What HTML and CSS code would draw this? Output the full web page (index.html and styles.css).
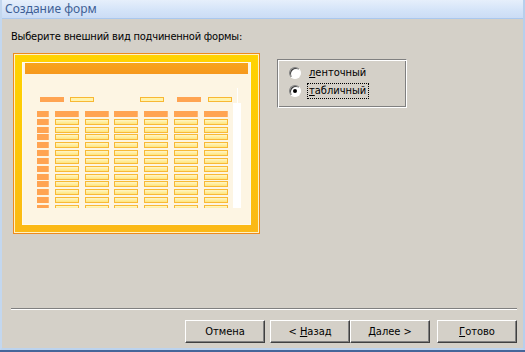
FILE: index.html
```html
<!DOCTYPE html>
<html lang="ru">
<head>
    <meta charset="UTF-8">
    <title>Создание форм</title>
    <link rel="stylesheet" href="styles.css">
</head>
<body>
    <div class="window">
        <div class="titlebar">Создание форм</div>

        <div class="content">
            <p class="prompt">Выберите внешний вид подчиненной формы:</p>

            <div class="main">
                <!-- preview of the table layout -->
                <div class="preview">
                    <div class="frame">
                        <div class="sheet">
                            <div class="sheet-head"></div>
                            <div class="labels">
                                <span class="lbl orange l1"></span>
                                <span class="lbl yellow l2"></span>
                                <span class="lbl yellow l3"></span>
                                <span class="lbl orange l4"></span>
                                <span class="lbl yellow l5"></span>
                            </div>
                            <div class="grid" id="grid"></div>
                            <div class="scroll-line"></div>
                            <div class="scroll-bar"></div>
                        </div>
                    </div>
                </div>

                <!-- layout choice -->
                <div class="group">
                    <div class="option">
                        <span class="radio"></span>
                        <span class="option-label"><u>л</u>енточный</span>
                    </div>
                    <div class="option">
                        <span class="radio checked"></span>
                        <span class="option-label focused"><u>т</u>абличный</span>
                    </div>
                </div>
            </div>
        </div>

        <div class="footer">
            <div class="separator"></div>
            <div class="buttons">
                <button type="button" class="btn cancel">Отмена</button>
                <button type="button" class="btn">&lt; <u>Н</u>азад</button>
                <button type="button" class="btn"><u>Д</u>алее &gt;</button>
                <button type="button" class="btn finish"><u>Г</u>отово</button>
            </div>
        </div>
    </div>

    <script>
        // build the miniature table: header row + data rows
        const grid = document.getElementById('grid');
        const rows = 13;
        const cols = 7;
        for (let r = 0; r < rows; r++) {
            for (let c = 0; c < cols; c++) {
                const cell = document.createElement('span');
                cell.className = (r === 0 || c === 0) ? 'cell head' : 'cell field';
                grid.appendChild(cell);
            }
        }
    </script>
</body>
</html>
```

FILE: styles.css
```css
* {
    box-sizing: border-box;
}
body {
    margin: 0;
    width: 525px;
    height: 352px;
    overflow: hidden;
    background-color: #46669a;
    font-family: "DejaVu Sans Condensed", "Liberation Sans", sans-serif;
    font-size: 11px;
    color: #000;
}
.window {
    display: flex;
    flex-direction: column;
    width: 525px;
    height: 350px;
    background-color: #d4d0c8;
    border-left: 2px solid #c3d7ef;
    border-right: 2px solid #b7cfec;
    border-bottom: 2px solid #bcd3ee;
}
.titlebar {
    height: 19px;
    padding-left: 3px;
    line-height: 18px;
    font-family: "Noto Sans", sans-serif;
    font-size: 12px;
    color: #3e5f95;
    background: linear-gradient(#e6effb, #d3e3f8 60%, #cbdcf5);
    border-bottom: 1px solid #aac8ee;
}
.content {
    flex: 1;
}
.prompt {
    margin: 11px 0 0 9px;
    line-height: 13px;
    letter-spacing: -0.2px;
}
.main {
    display: flex;
    align-items: flex-start;
    margin: 10px 0 0 11px;
}

/* preview picture */
.preview {
    width: 247px;
    height: 181px;
    border: 1px solid #ee8a1d;
}
.frame {
    height: 100%;
    padding: 7px;
    border: 1px solid #fff3c4;
    background: linear-gradient(#ffd300, #fcc20c 70%, #fbb816);
}
.sheet {
    position: relative;
    height: 100%;
    overflow: hidden;
    background-color: #fdf5e3;
    border: 1px solid #fffaec;
}
.sheet-head {
    height: 11px;
    margin: 0 2px;
    background: linear-gradient(#f8a41b, #f6981e);
}
.labels {
    display: flex;
    height: 5px;
    margin-top: 23px;
}
.lbl {
    width: 24px;
    height: 5px;
}
.lbl.orange {
    background-color: #ffa452;
}
.lbl.yellow {
    background-color: #fff3ad;
    border: 1px solid #f8b833;
}
.l1 { margin-left: 17px; }
.l2 { margin-left: 6px; }
.l3 { margin-left: 46px; }
.l4 { margin-left: 13px; }
.l5 { margin-left: 7px; }

.grid {
    display: grid;
    grid-template-columns: 12px repeat(6, 24px);
    grid-auto-rows: 6px;
    column-gap: 5.8px;
    row-gap: 1.83px;
    height: 97px;
    margin: 9px 0 0 14px;
    overflow: hidden;
}
.cell.head {
    background-color: #ffa452;
    border-right: 1px solid #ffb774;
}
.cell.field {
    background: linear-gradient(#fff6c6, #ffe57c);
    border: 1px solid #f8b936;
}
.scroll-line {
    position: absolute;
    left: 214px;
    top: 25px;
    width: 1px;
    height: 15px;
    background-color: #fff;
}
.scroll-bar {
    position: absolute;
    left: 210px;
    top: 40px;
    width: 8px;
    height: 105px;
    background-color: #fff;
}

/* radio group */
.group {
    width: 130px;
    height: 49px;
    margin: 6px 0 0 17px;
    padding: 4px 0 0 11px;
    border: 1px solid;
    border-color: #808080 #fff #fff #808080;
    box-shadow: inset 1px 1px #fff, inset -1px -1px #808080;
}
.option {
    display: flex;
    align-items: center;
    height: 18px;
}
.radio {
    position: relative;
    width: 12px;
    height: 12px;
    border-radius: 50%;
    background-color: #fff;
    border: 1px solid;
    border-color: #808080 #fff #fff #808080;
    box-shadow: inset 1px 1px #404040;
}
.radio.checked::after {
    content: "";
    position: absolute;
    left: 3px;
    top: 3px;
    width: 4px;
    height: 4px;
    border-radius: 50%;
    background-color: #000;
}
.option-label {
    height: 16px;
    margin-left: 6px;
    padding: 0 2px 0 1px;
    line-height: 14px;
    border: 1px dotted transparent;
}
.option-label.focused {
    border-color: #000;
}

/* bottom part */
.separator {
    height: 2px;
    margin: 0 6px 0 9px;
    border-top: 1px solid #808080;
    border-bottom: 1px solid #fff;
}
.buttons {
    display: flex;
    justify-content: flex-end;
    margin-top: 10px;
    padding: 0 6px 5px 0;
}
.btn {
    width: 80px;
    height: 23px;
    padding: 0;
    font-family: inherit;
    font-size: 11px;
    color: #000;
    background-color: #d4d0c8;
    border: 1px solid;
    border-color: #fff #404040 #404040 #fff;
    box-shadow: inset -1px -1px #808080;
    border-radius: 0;
}
.btn.cancel {
    margin-right: 5px;
}
.btn.finish {
    margin-left: 7px;
}
```
